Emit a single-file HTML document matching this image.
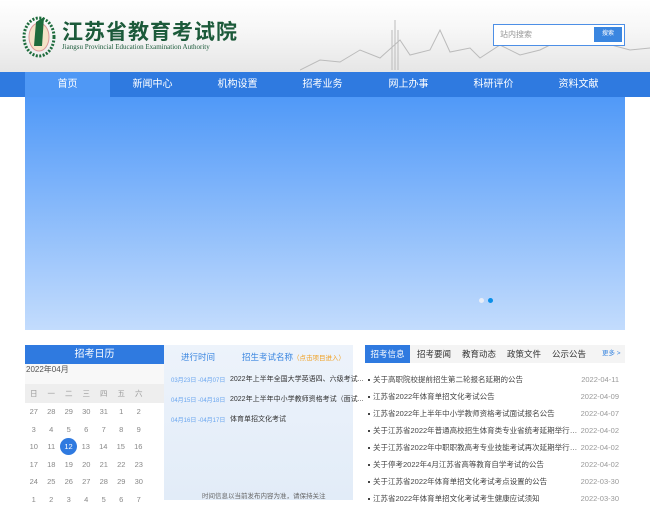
<!DOCTYPE html>
<html><head><meta charset="utf-8"><style>
*{margin:0;padding:0;box-sizing:border-box}
body{width:650px;height:500px;overflow:hidden;background:#fff;font-family:"Liberation Sans","Noto Sans CJK SC",sans-serif;position:relative}
.hdr{position:absolute;left:0;top:0;width:650px;height:72px;background:linear-gradient(#fff 0,#f7f7f7 40%,#e6e6e6 100%)}
.nav{position:absolute;left:0;top:72px;width:650px;height:25px;background:#2f7ae0}
.nav span{position:absolute;top:0;height:25px;line-height:25px;color:#fff;font-size:10px;width:85px;text-align:center}
.banner{position:absolute;left:25px;top:97px;width:600px;height:233px;background:linear-gradient(#5099f8,#c3dcfd)}
.dot{position:absolute;top:298px;width:5px;height:5px;border-radius:50%}
.cal{position:absolute;left:25px;top:345px;width:139px;height:155px}
.calh{background:#2f7ae0;color:#fff;font-size:10px;height:19px;line-height:19px;text-align:center}
.mon{background:#f8f8f8;height:20px;font-size:8px;color:#555;padding-left:1px;line-height:11px}
.wk{background:#eee;height:19px;display:flex}
.wk span,.row span{width:17.5px;text-align:center;font-size:7.5px;color:#999;line-height:19px;display:block}
.row{display:flex;height:17.5px}
.row span{line-height:17.5px;color:#888}
.sel{background:#2f7ae0;color:#fff!important;border-radius:50%;width:17px!important;height:17px;line-height:17px!important}
.mid{position:absolute;left:164px;top:345px;width:189px;height:155px;background:linear-gradient(#edf3fb,#e2ecf8)}
.mid div{position:absolute;font-size:7px;white-space:nowrap}
.tabs{position:absolute;left:365px;top:345px;width:260px;height:18px;background:#f4f4f4}
.tabs span{position:absolute;top:0;line-height:18px;font-size:8.5px;color:#333}
.list div{position:absolute;left:368px;width:255px;font-size:7.5px;color:#444;white-space:nowrap;height:12px;line-height:12px}
.list div i{font-style:normal;display:inline-block;max-width:208px;overflow:hidden;text-overflow:ellipsis;vertical-align:top}
.list div b{position:absolute;right:4px;top:0;font-weight:normal;color:#999}
.list div:before{content:"";display:inline-block;width:2px;height:2px;background:#444;margin-right:3px;vertical-align:middle}
</style></head><body>
<div class="hdr">
<svg style="position:absolute;left:300px;top:10px" width="350" height="62"><g fill="none" stroke="#bbb" stroke-width="1"><path d="M0 60 L20 50 L40 52 L60 40 L80 48 L100 30 L110 45 L130 40 L140 20 L150 42 L170 38 L180 48 L200 35 L220 45 L240 40 L260 30 L280 25 L300 32 L330 40 L350 38"/><path d="M95 60 V10 M92 60 V20 M98 60 V20"/></g></svg>
<svg style="position:absolute;left:22px;top:12px" width="34" height="46"><ellipse cx="17" cy="25" rx="15" ry="19" fill="none" stroke="#1d6b3c" stroke-width="3" stroke-dasharray="2 1.5"/><ellipse cx="17" cy="25" rx="10" ry="14" fill="#f3e3c8" stroke="#d99" /><path d="M12 34 L14 10 L22 5 L20 34 Z" fill="#1d6b3c"/></svg>
<div style="position:absolute;left:62px;top:19px;font-size:21px;font-weight:bold;color:#1c5a3a;letter-spacing:1px;font-family:'Noto Sans CJK SC',sans-serif;line-height:24px">江苏省教育考试院</div>
<div style="position:absolute;left:62px;top:43px;font-size:7px;color:#1c5a3a;font-family:'Liberation Serif',serif;white-space:nowrap">Jiangsu Provincial Education Examination Authority</div>
<div style="position:absolute;left:493px;top:24px;width:132px;height:22px;border:1.5px solid #4d8fe6;background:#fff"><span style="position:absolute;left:6px;top:4px;font-size:8px;color:#999">站内搜索</span><span style="position:absolute;right:2px;top:2px;width:28px;height:15px;background:#3a86e0;color:#fff;font-size:6px;line-height:15px;text-align:center">搜索</span></div>
</div>
<div class="nav">
<span style="left:25px;background:#4f98f5">首页</span><span style="left:110px">新闻中心</span><span style="left:195px">机构设置</span><span style="left:280px">招考业务</span><span style="left:366px">网上办事</span><span style="left:451px">科研评价</span><span style="left:536px">资料文献</span>
</div>
<div class="banner"></div>
<div class="dot" style="left:479px;background:#e8eef8"></div><div class="dot" style="left:488px;background:#0a8fe8"></div>
<div class="cal">
<div class="calh">招考日历</div>
<div class="mon">2022年04月</div>
<div class="wk"><span>日</span><span>一</span><span>二</span><span>三</span><span>四</span><span>五</span><span>六</span></div>
<div class="row"><span>27</span><span>28</span><span>29</span><span>30</span><span>31</span><span>1</span><span>2</span></div>
<div class="row"><span>3</span><span>4</span><span>5</span><span>6</span><span>7</span><span>8</span><span>9</span></div>
<div class="row"><span>10</span><span>11</span><span class="sel">12</span><span>13</span><span>14</span><span>15</span><span>16</span></div>
<div class="row"><span>17</span><span>18</span><span>19</span><span>20</span><span>21</span><span>22</span><span>23</span></div>
<div class="row"><span>24</span><span>25</span><span>26</span><span>27</span><span>28</span><span>29</span><span>30</span></div>
<div class="row"><span>1</span><span>2</span><span>3</span><span>4</span><span>5</span><span>6</span><span>7</span></div>
</div>
<div class="mid">
<div style="left:17px;top:6px;font-size:8.5px;color:#3a86e0">进行时间</div>
<div style="left:78px;top:6px;font-size:8.5px;color:#3a86e0">招生考试名称<span style="color:#f0a020;font-size:6.5px">（点击项目进入）</span></div>
<div style="left:7px;top:30px;color:#6aa6ef;font-size:6px">03月23日 -04月07日</div><div style="left:66px;top:29px;color:#333">2022年上半年全国大学英语四、六级考试...</div>
<div style="left:7px;top:50px;color:#6aa6ef;font-size:6px">04月15日 -04月18日</div><div style="left:66px;top:49px;color:#333">2022年上半年中小学教师资格考试（面试...</div>
<div style="left:7px;top:70px;color:#6aa6ef;font-size:6px">04月16日 -04月17日</div><div style="left:66px;top:69px;color:#333">体育单招文化考试</div>
<div style="left:38px;top:145px;color:#666;font-size:6.5px">时间信息以当前发布内容为准，请保持关注</div>
</div>
<div class="tabs">
<span style="left:0;width:45px;background:#2f7ae0;color:#fff;text-align:center">招考信息</span>
<span style="left:52px">招考要闻</span><span style="left:97px">教育动态</span><span style="left:142px">政策文件</span><span style="left:187px">公示公告</span><span style="left:237px;font-size:6.5px;color:#3a86e0">更多 &gt;</span>
</div>
<div class="list">
<div style="top:374px"><i>关于高职院校提前招生第二轮报名延期的公告</i><b>2022-04-11</b></div>
<div style="top:391px"><i>江苏省2022年体育单招文化考试公告</i><b>2022-04-09</b></div>
<div style="top:408px"><i>江苏省2022年上半年中小学教师资格考试面试报名公告</i><b>2022-04-07</b></div>
<div style="top:425px"><i>关于江苏省2022年普通高校招生体育类专业省统考延期举行的公告</i><b>2022-04-02</b></div>
<div style="top:442px"><i>关于江苏省2022年中职职教高考专业技能考试再次延期举行的公告</i><b>2022-04-02</b></div>
<div style="top:459px"><i>关于停考2022年4月江苏省高等教育自学考试的公告</i><b>2022-04-02</b></div>
<div style="top:476px"><i>关于江苏省2022年体育单招文化考试考点设置的公告</i><b>2022-03-30</b></div>
<div style="top:493px"><i>江苏省2022年体育单招文化考试考生健康应试须知</i><b>2022-03-30</b></div>
</div>
</body></html>
